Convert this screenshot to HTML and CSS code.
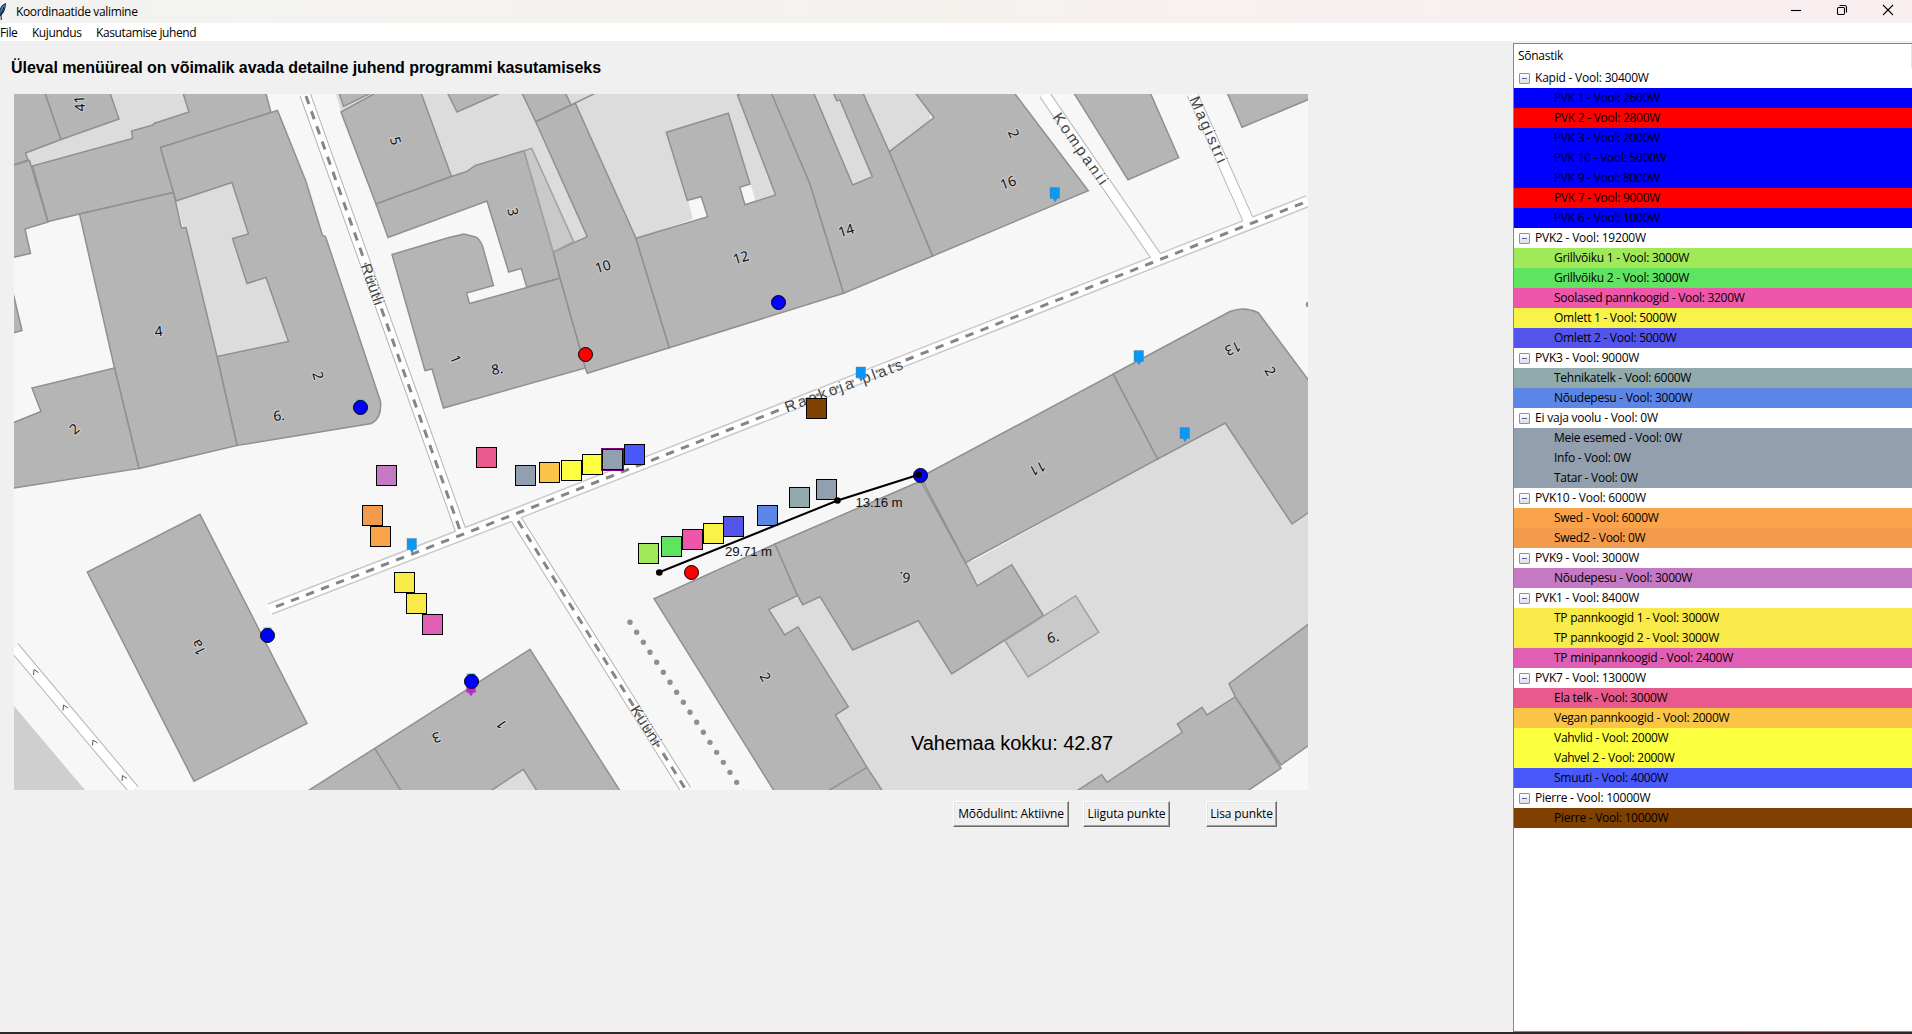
FILE: index.html
```html
<!DOCTYPE html>
<html lang="et">
<head>
<meta charset="utf-8">
<title>Koordinaatide valimine</title>
<link rel="stylesheet" href="styles.css">
</head>
<body>
<div class="window">
  <header class="titlebar">
    <svg class="feather" width="7" height="18" viewBox="0 0 7 18"><path d="M5.5 .5Q1 2 0 7V13L1 12Q5 9 5.5 .5Z" fill="#4d87c4" stroke="#1b2b3d" stroke-width="1"/><path d="M4 4L1 12 1.3 17" fill="none" stroke="#111" stroke-width="1"/></svg>
    <span class="title">Koordinaatide valimine</span>
    <div class="controls">
      <svg width="12" height="12" viewBox="0 0 12 12"><path d="M1 6.5H11" class="ctl"/></svg>
      <svg width="12" height="12" viewBox="0 0 12 12"><rect x="1.5" y="3.5" width="7" height="7" rx="1.2" class="ctl"/><path d="M3.5 1.5H8.5Q10.5 1.5 10.5 3.5V8.5" class="ctl"/></svg>
      <svg width="12" height="12" viewBox="0 0 12 12"><path d="M1 1L11 11M11 1L1 11" class="ctl"/></svg>
    </div>
  </header>
  <nav class="menu"><span>File</span><span>Kujundus</span><span>Kasutamise juhend</span></nav>
  <main class="main">
    <section class="work">
      <h1>Üleval menüüreal on võimalik avada detailne juhend programmi kasutamiseks</h1>
      <svg class="map" width="1294" height="696" viewBox="14 94 1294 696">
        <rect x="14" y="94" width="1294" height="696" fill="#f7f7f7"/>
        <!-- courtyards -->
        <g class="yard">
          <path d="M110 94H183L192 114 150 132 134 142 32 167 25 153Z"/>
          <path d="M176 201L232 182 250 234 236 240 248 282 267 277 289 341 217 357 184 230Z"/>
          <path d="M421 94H740L778 195 745 206 738 187 690 201 693 219 636 239 600 230 553 252 524 151 452 177Z"/>
          <path d="M336 94L341 112 381 94Z"/>
          <path d="M814 94H930V130L889 152 872 180 852 186Z"/>
          <path d="M765 605L975 560 1157 459 1230 420 1292 524 1308 512V745L1248 790H830Z"/>
          <path d="M491 790L523 769 537 790Z"/>
        </g>
        <path d="M688.3 201L701.3 196.7 707.7 216.7 693.3 220Z M739.7 187.3L750.7 184.7 755.3 200 745 204.7Z" fill="#f7f7f7"/>
        <path d="M14 706L85 790H14Z" fill="#cfcfcf"/>
        <!-- roads -->
        <g class="casing">
          <path d="M305 94L462 534M513.5 515L686 790M1044.3 94L1158.500 260M1192.3 94L1250 224M14 647L134 790"/>
        </g>
        <path class="casing main-road" d="M270 609L514 514.5 660 457 906 360 1160 259.500 1308 201"/>
        <path class="surface main-road" d="M269 609.4L514 514.5 660 457 906 360 1160 259.500 1308 201"/>
        <path class="surface" d="M305 94L462 534M513.5 515L686 790M1044.3 94L1158.500 260M1192.3 94L1250 224M14 647L134 790"/>
        <path class="dash" d="M306 96L461 533M518 521L686 790"/>
        <path class="dash" d="M276 606.7L514 514.5 660 457 906 360 1160 259.500 1308 201"/>
        <path d="M630 622.3L743.5 792.6" class="dots"/>
        <circle cx="1308.5" cy="304.5" r="2.8" fill="#8f8f8f"/>
        <!-- buildings -->
        <g class="bld">
          <path d="M10 90H44L61 139.5 25.5 153 28 160 10 166Z"/>
          <path d="M44 90H109L119 119 61 139.5Z"/>
          <path d="M10 166L29.5 160.5 48 222 25 229 30.5 253.5 10 258Z"/>
          <path d="M32.5 166L132.5 138.5 131.5 131 153 125 154 123.5 189 112 182 90H265L271 112.5 160.5 147.5 173.5 192.5 79.5 214 48 221.5Z"/>
          <path d="M160.5 147.5L277.5 110.5 306 181.5 322.5 235.5 325.5 236.5 380.5 401.5Q382 418 371.5 423.5L237 445.5 217 356.5 288.5 341.5 266 277.5 247 283.5 232.5 238.5 248.5 234 232 182.5 176 201 173.5 192.5Z"/>
          <path d="M79.5 214L173.5 192.5 181.5 228 186 227.5 217 356.5 237 445.5 139 468.5 114.5 368Z"/>
          <path d="M114.5 368L32 388 41 411.5 10 424V488.7L139 468.5Z"/>
          <path d="M10 280L22 330.5 10 334Z"/>
          <path d="M338 90L343.5 106.5 373 92Z"/>
          <path d="M341 112L381 90H420L451.5 176.5 376 204Z"/>
          <path d="M376 204L451.5 176.5 466.5 171.5 475.5 165.5 524 150.7 553.3 252 560 278.3 526.7 287 521.3 268.5 508.7 272 487 201 388 237.5Z"/>
          <path d="M446 90L457 112 507 90Z"/>
          <path d="M520.5 90H564L571 105 535.7 121.7Z"/>
          <path d="M571 105L602 90" />
          <path d="M535.7 121.7L575.3 103.3 636 238.3 669.3 347.7 587.3 373.3 585.3 368 560 278.3 553.3 252 587.3 236.7Z"/>
          <path d="M560 278.3L469.5 303.5 466.5 293 493.5 285.5 482.5 246Q479 238 475.5 237L464 234 449 237.5 392 254.5 425 370.5 432 369 443.5 408 585.3 368Z"/>
          <path d="M636 238.3L707.7 216.7 701.3 196.7 687.3 200.3 666.3 132.3 728.3 113.3 750 184 739.7 187.3 745 204.7 775.7 195 737.5 95 743 92 771 90 810 184 843.7 293.3 669.3 347.7Z"/>
          <path d="M770 90H812.4L852.7 185 872.3 176.7 840 100 836.7 100.7 832 90H861.5L889.3 151.7 932.7 256 843.7 293.3 810 184Z"/>
          <path d="M889.3 151.7L934 117.7 913 90H1012L1088.3 190.7 932.7 256Z"/>
          <path d="M1072 90L1128 179.7 1178.7 157.7 1149 90Z"/>
          <path d="M1226 90L1242 127.3 1312 98V90Z"/>
          <path d="M200 514.3L307 723.3 194 781.3 87.3 572Z"/>
          <path d="M303 794L374.7 748.3 530 649.3 622 794H539L523.3 769.3 486 794Z"/>
          <path d="M374.7 748.3L403 794"/>
          <path d="M654 598.7L775 544 797.7 595.7 768.7 609.3 784.7 635 798 626.7 848.3 706.7 835.3 715 867 767.3 884.5 794H776Z"/>
          <path d="M867 767.3L823 794"/>
          <path d="M775 544L920.7 481 965.5 562.7 977.3 586 1011.7 564.7 1043.3 615.3 951.7 674 918.3 620.7 852.7 650 820 596.7 802.7 604.7 797.7 595.7Z"/>
          <path d="M920.7 477L1113.3 374 1157.7 459 965.5 562.7Z"/>
          <path d="M1113.3 374L1230 311.5Q1244 306 1258.3 312.7L1312 385V510L1292 524 1225.3 423 1157.7 459Z"/>
          <path d="M1072 794L1101.7 774.7 1107 782.3 1182.3 732.3 1177.3 724 1202 707.3 1207 715 1235.3 696.7 1281 768.3 1243 794Z"/>
          <path d="M1235.3 696.7L1229 683.7 1312 621.5V743L1281 765Z"/>
          <path class="light" d="M524 150.7L531.7 148.3 573.7 241.7 553.3 252Z"/>
          <path class="light" d="M1005 640.7L1075.7 595.7 1098.7 632.3 1028 677Z"/>
        </g>
        <g class="chev"><path d="M33.5 675L34 669.500 38.500 672.500"/><path d="M63 710.500L63.500 705 68 708"/><path d="M92.500 745.500L93 740 97.500 743"/><path d="M122 781L122.500 775.500 127 778.500"/></g>
        <!-- house numbers -->
        <g class="num">
          <text transform="translate(79 103.500) rotate(-93)">41</text>
          <text transform="translate(158.500 330.700) rotate(-5)">4</text>
          <text transform="translate(318.500 375.500) rotate(75)">2</text>
          <text transform="translate(279 415) rotate(-5)">6.</text>
          <text transform="translate(74 428.500) rotate(-40)">2</text>
          <text transform="translate(396 140.700) rotate(75)">5</text>
          <text transform="translate(513.500 211.700) rotate(78)">3</text>
          <text transform="translate(602.700 266) rotate(-17)">10</text>
          <text transform="translate(740.700 257) rotate(-17)">12</text>
          <text transform="translate(846 230) rotate(-17)">14</text>
          <text transform="translate(456 359) rotate(68)">1</text>
          <text transform="translate(497 368.500) rotate(-10)">8.</text>
          <text transform="translate(1014.300 133.300) rotate(65)">2</text>
          <text transform="translate(1008 182) rotate(-20)">16</text>
          <text transform="translate(1233 349) rotate(155)">13</text>
          <text transform="translate(1270.700 371) rotate(60)">2</text>
          <text transform="translate(1037.700 469) rotate(152)">11</text>
          <text transform="translate(904.500 578) rotate(188)">6.</text>
          <text transform="translate(1052.700 636.700) rotate(-15)">6.</text>
          <text transform="translate(765.700 676.700) rotate(60)">2</text>
          <text transform="translate(198 647.700) rotate(-115)">1a</text>
          <text transform="translate(436.700 738) rotate(160)">3</text>
          <text transform="translate(501 724.700) rotate(235)">1</text>
        </g>
        <!-- street names -->
        <g class="street">
          <text transform="translate(365.500 264) rotate(70.500)" textLength="43">Rüütli</text>
          <text transform="translate(785 407.500) rotate(-20.500)" textLength="125">Raekoja plats</text>
          <text transform="translate(1056.500 114) rotate(55)" textLength="84">Kompanii</text>
          <text transform="translate(1194 97) rotate(66)" textLength="71">Magistri</text>
          <text transform="translate(634.500 706.500) rotate(58)" textLength="44">Küüni</text>
        </g>
        <!-- power sockets -->
        <g class="pin">
          <path d="M1050 187.500h9.500v11h-2.500l-2 3.500-2-3.500h-3z"/>
          <path d="M1134 350.500h9.500v11h-2.500l-2 3.500-2-3.500h-3z"/>
          <path d="M1180 427.500h9.500v11h-2.500l-2 3.500-2-3.500h-3z"/>
          <path d="M856 367h9.500v11h-2.500l-2 3.500-2-3.500h-3z"/>
          <path d="M407 538.500h9.500v11h-2.500l-2 3.500-2-3.500h-3z"/>
          <path d="M466.500 684h9v8.500h-2l-2.500 3.500-2.500-3.500h-2z" fill="#c41fe0"/>
        </g>
        <path d="M466.500 674.500h9M263.500 628.500h8M356 400.500h9" stroke="#3cb8f5" stroke-width="2"/>
        <!-- stalls -->
        <g class="stall">
          <rect x="515.500" y="465.500" width="20" height="20" fill="#929faf"/>
          <rect x="539.500" y="462.500" width="20" height="20" fill="#fac546"/>
          <rect x="561.500" y="460.500" width="20" height="20" fill="#fcff40"/>
          <rect x="582.500" y="454.500" width="20" height="20" fill="#fcff40"/>
          <path d="M601 448h23v23h-23z" fill="#800080" stroke="none"/>
          <rect x="602.500" y="449.500" width="20" height="20" fill="#929faf"/>
          <rect x="624.500" y="444.500" width="20" height="20" fill="#4958fa"/>
          <rect x="638.500" y="543.500" width="20" height="20" fill="#a0ea5a"/>
          <rect x="661.500" y="536.500" width="20" height="20" fill="#5ee460"/>
          <rect x="682.500" y="529.500" width="20" height="20" fill="#ed56a9"/>
          <rect x="703.500" y="523.500" width="20" height="20" fill="#f8f348"/>
          <rect x="723.500" y="516.500" width="20" height="20" fill="#5354ec"/>
          <rect x="757.500" y="505.500" width="20" height="20" fill="#5b86e6"/>
          <rect x="789.500" y="487.500" width="20" height="20" fill="#91aaab"/>
          <rect x="816.500" y="479.500" width="20" height="20" fill="#929faf"/>
          <rect x="806.500" y="398.500" width="20" height="20" fill="#804000"/>
          <rect x="376.500" y="465.500" width="20" height="20" fill="#c679c3"/>
          <rect x="476.500" y="447.500" width="20" height="20" fill="#e85a8b"/>
          <rect x="362.500" y="505.500" width="20" height="20" fill="#f39b4d"/>
          <rect x="370.500" y="526.500" width="20" height="20" fill="#f9a44a"/>
          <rect x="394.500" y="572.500" width="20" height="20" fill="#f8ea48"/>
          <rect x="406.500" y="593.500" width="20" height="20" fill="#f8ea48"/>
          <rect x="422.500" y="614.500" width="20" height="20" fill="#e05eb3"/>
        </g>
        <g class="cabinet">
          <circle cx="920.500" cy="475.500" r="7"/><circle cx="778.500" cy="302.500" r="7"/><circle cx="360.500" cy="407.500" r="7"/><circle cx="267.500" cy="635.500" r="7"/><circle cx="471.500" cy="681.500" r="7"/>
          <circle cx="691.500" cy="572.500" r="7" fill="#f00"/><circle cx="585.500" cy="354.500" r="7" fill="#f00"/>
        </g>
        <!-- measuring tape -->
        <path d="M659.300 572.300L837.500 500.500 918.500 474.700" fill="none" stroke="#000" stroke-width="2"/>
        <circle cx="659.300" cy="572.500" r="3.300"/><circle cx="837.500" cy="500.500" r="3.300"/><circle cx="918.500" cy="474.700" r="3.300"/>
        <g class="measure">
          <text x="725" y="556" textLength="47">29.71 m</text>
          <text x="855.500" y="507" textLength="47">13.16 m</text>
          <text class="total" x="911" y="750" textLength="202">Vahemaa kokku: 42.87</text>
        </g>
      </svg>
      <div class="buttons">
        <button class="b1">Mõõdulint: Aktiivne</button>
        <button class="b2">Liiguta punkte</button>
        <button class="b3">Lisa punkte</button>
      </div>
    </section>
    <aside class="tree">
      <div class="head">Sõnastik</div>
      <div class="group">Kapid - Vool: 30400W</div>
      <div class="row blue">PVK 1 - Vool: 2600W</div>
      <div class="row red">PVK 2 - Vool: 2800W</div>
      <div class="row blue">PVK 3 - Vool: 2000W</div>
      <div class="row blue">PVK 10 - Vool: 5000W</div>
      <div class="row blue">PVK 9 - Vool: 8000W</div>
      <div class="row red">PVK 7 - Vool: 9000W</div>
      <div class="row blue">PVK 6 - Vool: 1000W</div>
      <div class="group">PVK2 - Vool: 19200W</div>
      <div class="row lime">Grillvõiku 1 - Vool: 3000W</div>
      <div class="row green">Grillvõiku 2 - Vool: 3000W</div>
      <div class="row pink">Soolased pannkoogid - Vool: 3200W</div>
      <div class="row lemon">Omlett 1 - Vool: 5000W</div>
      <div class="row indigo">Omlett 2 - Vool: 5000W</div>
      <div class="group">PVK3 - Vool: 9000W</div>
      <div class="row teal">Tehnikatelk - Vool: 6000W</div>
      <div class="row sky">Nõudepesu - Vool: 3000W</div>
      <div class="group">Ei vaja voolu - Vool: 0W</div>
      <div class="row slate">Meie esemed - Vool: 0W</div>
      <div class="row slate">Info - Vool: 0W</div>
      <div class="row slate">Tatar - Vool: 0W</div>
      <div class="group">PVK10 - Vool: 6000W</div>
      <div class="row orange">Swed - Vool: 6000W</div>
      <div class="row apricot">Swed2 - Vool: 0W</div>
      <div class="group">PVK9 - Vool: 3000W</div>
      <div class="row orchid">Nõudepesu - Vool: 3000W</div>
      <div class="group">PVK1 - Vool: 8400W</div>
      <div class="row corn">TP pannkoogid 1 - Vool: 3000W</div>
      <div class="row corn">TP pannkoogid 2 - Vool: 3000W</div>
      <div class="row magenta">TP minipannkoogid - Vool: 2400W</div>
      <div class="group">PVK7 - Vool: 13000W</div>
      <div class="row rose">Ela telk - Vool: 3000W</div>
      <div class="row amber">Vegan pannkoogid - Vool: 2000W</div>
      <div class="row yellow">Vahvlid - Vool: 2000W</div>
      <div class="row yellow">Vahvel 2 - Vool: 2000W</div>
      <div class="row royal">Smuuti - Vool: 4000W</div>
      <div class="group">Pierre - Vool: 10000W</div>
      <div class="row brown">Pierre - Vool: 10000W</div>
    </aside>
  </main>
  <div class="edge"></div>
</div>
</body>
</html>
```
FILE: styles.css
```css
* { box-sizing: border-box; }
body { margin: 0; font: 12px/20px "Open Sans", "Noto Sans", sans-serif; letter-spacing: -0.4px; color: #000; }
.window { width: 1912px; height: 1034px; display: flex; flex-direction: column; background: #f0f0f0; overflow: hidden; }

.titlebar { height: 23px; flex: none; display: flex; align-items: center; background: linear-gradient(90deg, #f2f3f1, #f5f2ee 50%, #f9eff1 80%); }
.feather { display: block; margin-top: 1px; }
.title { margin-left: 9px; letter-spacing: -0.35px; }
.controls { margin-left: auto; display: flex; gap: 34px; padding: 0 18px 3px 0; }
.controls svg { display: block; }
.ctl { fill: none; stroke: #000; stroke-width: 1.1; }

.menu { height: 18px; flex: none; display: flex; gap: 14.5px; background: #fff; line-height: 19px; }
.main { flex: 1; display: flex; min-height: 0; }
.work { width: 1513px; flex: none; padding-left: 14px; }
h1 { margin: 0 0 0 -3px; height: 53px; padding-top: 17px; font: bold 16px/20px "Liberation Sans", sans-serif; letter-spacing: -0.055px; }

.map { display: block; overflow: hidden; }
.yard path { fill: #dcdcdc; }
.casing { fill: none; stroke: #b4b4b4; stroke-width: 11.5; }
.surface { fill: none; stroke: #fff; stroke-width: 9.5; }
.casing.main-road { stroke: #c8c8c8; stroke-width: 12.5; }
.surface.main-road { stroke-width: 9.5; }
.dash { fill: none; stroke: #858585; stroke-width: 3; stroke-dasharray: 8.5 7.6; }
.dots { fill: none; stroke: #8f8f8f; stroke-width: 5.4; stroke-linecap: round; stroke-dasharray: 0 12.02; }
.bld path { fill: #b5b5b5; stroke: #909090; stroke-width: 1.5; }
.bld .light { fill: #c9c9c9; stroke: #a0a0a0; }
.chev path { fill: none; stroke: #555; stroke-width: 1; }
.num text { font: 14px "Noto Sans", sans-serif; letter-spacing: 0; text-anchor: middle; dominant-baseline: central; fill: #111; stroke: #d0d0d0; stroke-width: 2px; paint-order: stroke; }
.street text { font: 15.5px "Liberation Sans", sans-serif; dominant-baseline: central; letter-spacing: 0; fill: #444; stroke: #fafafa; stroke-width: 1.5px; paint-order: stroke; }
.pin path { stroke: #777; stroke-width: .4; }
.pin { fill: #0a97f5; }
.stall rect { stroke: #000; stroke-width: 1; }
.cabinet { fill: #00f; stroke: #000; stroke-width: 1; }
.measure text { font: 13.3px "Liberation Sans", sans-serif; letter-spacing: 0; fill: #111; }
.measure .total { font-size: 20px; fill: #000; }

.buttons { display: flex; padding: 11px 0 0 939px; }
button { height: 26px; padding: 0; font: inherit; line-height: 22px; letter-spacing: -0.13px; color: #000; white-space: nowrap; background: #f0f0f0; border: 1px solid; border-color: #fff #696969 #696969 #fff; box-shadow: inset -1px -1px #a0a0a0, inset 1px 1px #e3e3e3; }
.b1 { width: 116px; }
.b2 { width: 87px; margin-left: 14px; }
.b3 { width: 71px; margin-left: 36px; }

.tree { flex: 1; background: #fff; border: 1px solid #828790; border-right: 0; margin-top: 2px; white-space: nowrap; letter-spacing: -0.27px; }
.head { height: 24px; line-height: 24px; padding-left: 4px; border-right: 1px solid #e2e2e2; }
.group, .row { height: 20px; line-height: 20px; }
.row { padding-left: 40px; }
.group { display: flex; align-items: center; gap: 5px; padding-left: 5px; letter-spacing: -0.22px; }
.group::before { content: ""; width: 9px; height: 9px; margin-top: 1px; border: 1px solid #919191; border-radius: 1px; background: linear-gradient(#4b63a7, #4b63a7) center / 5px 1px no-repeat, linear-gradient(#fff, #ddd); }
.blue { background: #00f; }
.red { background: #f00; }
.lime { background: #a0ea5a; }
.green { background: #5ee460; }
.pink { background: #ed56a9; }
.lemon { background: #f8f348; }
.indigo { background: #5354ec; }
.teal { background: #91aaab; }
.sky { background: #5b86e6; }
.slate { background: #929faf; }
.orange { background: #f9a44a; }
.apricot { background: #f39b4d; }
.orchid { background: #c679c3; }
.corn { background: #f8ea48; }
.magenta { background: #e05eb3; }
.rose { background: #e85a8b; }
.amber { background: #fac546; }
.yellow { background: #fcff40; }
.royal { background: #4958fa; }
.brown { background: #804000; }
.edge { height: 2px; flex: none; background: linear-gradient(90deg, #2b2629 88%, #4a1c20 93%, #2b2629); }
```
